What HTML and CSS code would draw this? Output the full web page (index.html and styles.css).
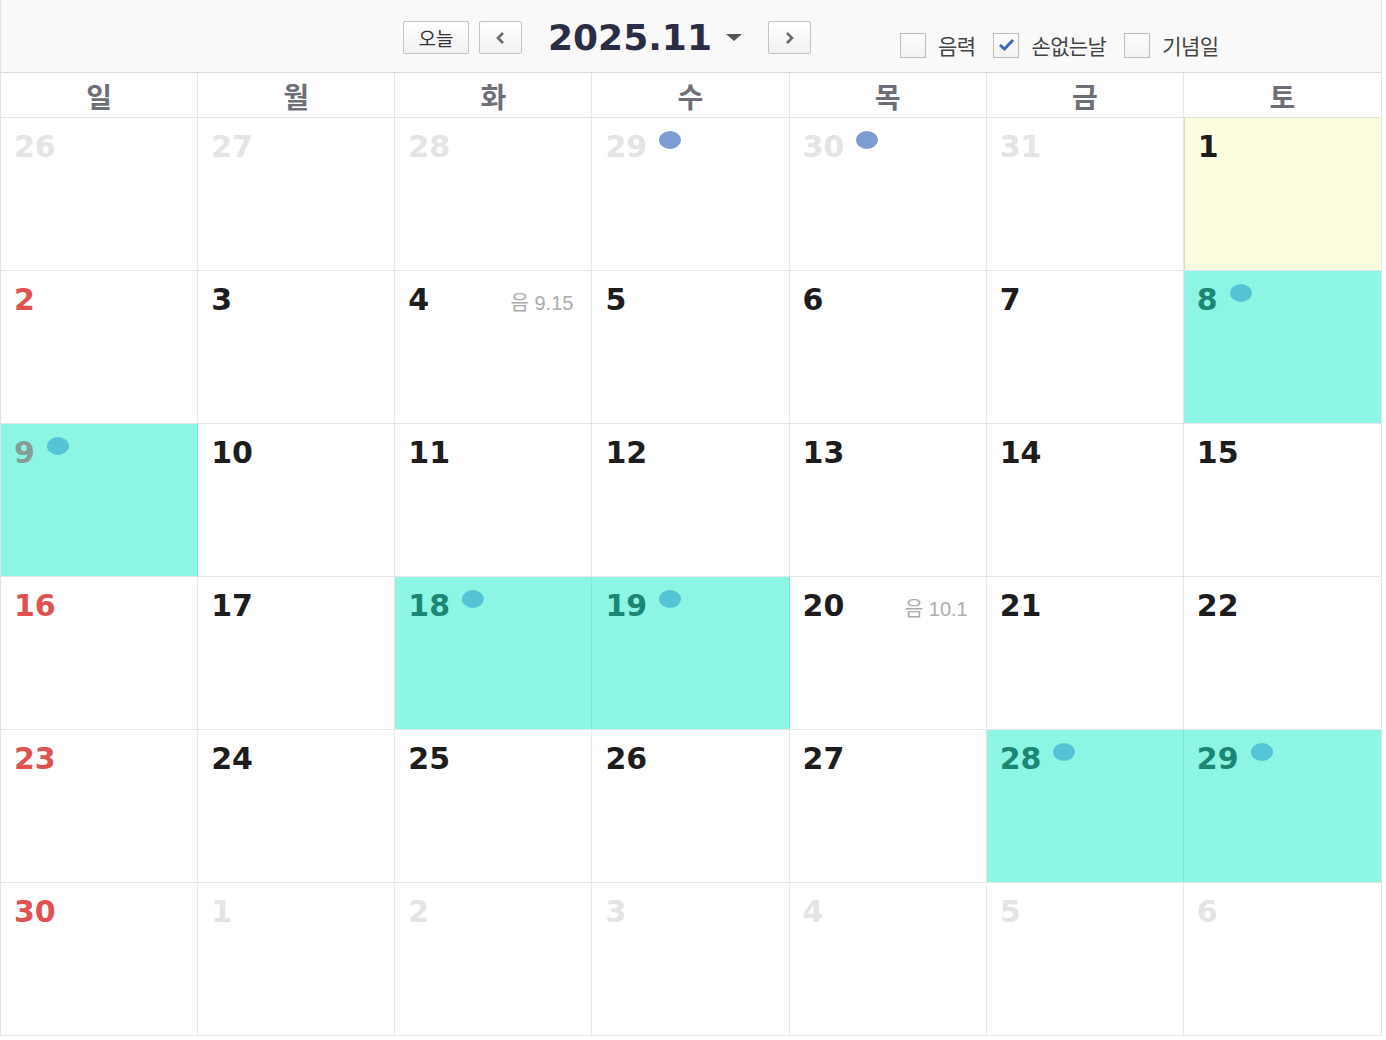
FILE: index.html
```html
<!DOCTYPE html>
<html lang="ko">
<head>
    <meta charset="UTF-8">
    <title>달력</title>
    <link rel="stylesheet" href="styles.css">
</head>
<body>
    <div class="toolbar">
        <div class="nav">
            <button class="btn btn-today">오늘</button>
            <button class="btn btn-arrow">
                <svg width="12" height="14" viewBox="0 0 12 14"><path d="M8 2 L3 7 L8 12" fill="none" stroke="#6a6a6a" stroke-width="2.6"/></svg>
            </button>
            <div class="month-title">2025.11</div>
            <span class="caret"></span>
            <button class="btn btn-arrow">
                <svg width="12" height="14" viewBox="0 0 12 14"><path d="M4 2 L9 7 L4 12" fill="none" stroke="#6a6a6a" stroke-width="2.6"/></svg>
            </button>
        </div>
        <div class="options">
            <label class="opt"><span class="box"></span>음력</label>
            <label class="opt"><span class="box">
                <svg width="17" height="14" viewBox="0 0 17 14"><path d="M2 7 L6.5 11 L15 2" fill="none" stroke="#3f67b8" stroke-width="3"/></svg>
            </span>손없는날</label>
            <label class="opt"><span class="box"></span>기념일</label>
        </div>
    </div>

    <div class="calendar">
        <div class="weekdays">
            <div>일</div><div>월</div><div>화</div><div>수</div><div>목</div><div>금</div><div>토</div>
        </div>

        <div class="week">
            <div class="cell other"><div class="day"><span class="num">26</span></div></div>
            <div class="cell other"><div class="day"><span class="num">27</span></div></div>
            <div class="cell other"><div class="day"><span class="num">28</span></div></div>
            <div class="cell other"><div class="day"><span class="num">29</span><span class="dot dot-past"></span></div></div>
            <div class="cell other"><div class="day"><span class="num">30</span><span class="dot dot-past"></span></div></div>
            <div class="cell other"><div class="day"><span class="num">31</span></div></div>
            <div class="cell today"><div class="day"><span class="num">1</span></div></div>
        </div>

        <div class="week">
            <div class="cell sun"><div class="day"><span class="num">2</span></div></div>
            <div class="cell"><div class="day"><span class="num">3</span></div></div>
            <div class="cell"><div class="day"><span class="num">4</span><span class="lunar">음 9.15</span></div></div>
            <div class="cell"><div class="day"><span class="num">5</span></div></div>
            <div class="cell"><div class="day"><span class="num">6</span></div></div>
            <div class="cell"><div class="day"><span class="num">7</span></div></div>
            <div class="cell good"><div class="day"><span class="num">8</span><span class="dot"></span></div></div>
        </div>

        <div class="week">
            <div class="cell good sun-good"><div class="day"><span class="num">9</span><span class="dot"></span></div></div>
            <div class="cell"><div class="day"><span class="num">10</span></div></div>
            <div class="cell"><div class="day"><span class="num">11</span></div></div>
            <div class="cell"><div class="day"><span class="num">12</span></div></div>
            <div class="cell"><div class="day"><span class="num">13</span></div></div>
            <div class="cell"><div class="day"><span class="num">14</span></div></div>
            <div class="cell"><div class="day"><span class="num">15</span></div></div>
        </div>

        <div class="week">
            <div class="cell sun"><div class="day"><span class="num">16</span></div></div>
            <div class="cell"><div class="day"><span class="num">17</span></div></div>
            <div class="cell good"><div class="day"><span class="num">18</span><span class="dot"></span></div></div>
            <div class="cell good"><div class="day"><span class="num">19</span><span class="dot"></span></div></div>
            <div class="cell"><div class="day"><span class="num">20</span><span class="lunar">음 10.1</span></div></div>
            <div class="cell"><div class="day"><span class="num">21</span></div></div>
            <div class="cell"><div class="day"><span class="num">22</span></div></div>
        </div>

        <div class="week">
            <div class="cell sun"><div class="day"><span class="num">23</span></div></div>
            <div class="cell"><div class="day"><span class="num">24</span></div></div>
            <div class="cell"><div class="day"><span class="num">25</span></div></div>
            <div class="cell"><div class="day"><span class="num">26</span></div></div>
            <div class="cell"><div class="day"><span class="num">27</span></div></div>
            <div class="cell good"><div class="day"><span class="num">28</span><span class="dot"></span></div></div>
            <div class="cell good"><div class="day"><span class="num">29</span><span class="dot"></span></div></div>
        </div>

        <div class="week">
            <div class="cell sun"><div class="day"><span class="num">30</span></div></div>
            <div class="cell other"><div class="day"><span class="num">1</span></div></div>
            <div class="cell other"><div class="day"><span class="num">2</span></div></div>
            <div class="cell other"><div class="day"><span class="num">3</span></div></div>
            <div class="cell other"><div class="day"><span class="num">4</span></div></div>
            <div class="cell other"><div class="day"><span class="num">5</span></div></div>
            <div class="cell other"><div class="day"><span class="num">6</span></div></div>
        </div>
    </div>
</body>
</html>
```

FILE: styles.css
```css
body {
    margin: 0;
    background: #fff;
    font-family: "Liberation Sans", "Noto Sans CJK KR", sans-serif;
}

/* 상단 툴바 */
.toolbar {
    height: 73px;
    box-sizing: border-box;
    width: 1382px;
    background: #f9f9fa;
    border-left: 1px solid #e4e4e4;
    border-right: 1px solid #e4e4e4;
    border-bottom: 1px solid #dcdcdc;
    display: flex;
    align-items: flex-start;
    padding-left: 402px;
}

.nav {
    display: flex;
    align-items: center;
    margin-top: 21px;
}

.btn {
    height: 33px;
    box-sizing: border-box;
    border: 1px solid #c3c3c3;
    border-radius: 2px;
    background: linear-gradient(#ffffff, #f1f1f1);
    padding: 0;
    display: flex;
    align-items: center;
    justify-content: center;
}

.btn-today {
    width: 66px;
    font-family: "Noto Sans CJK KR", sans-serif;
    font-size: 19px;
    color: #333;
    margin-right: 10px;
}

.btn-arrow {
    width: 43px;
}

.month-title {
    font-family: "DejaVu Sans", sans-serif;
    font-weight: bold;
    font-size: 36px;
    color: #2b2d44;
    margin-left: 26px;
    line-height: 33px;
}

.caret {
    width: 0;
    height: 0;
    border-left: 8px solid transparent;
    border-right: 8px solid transparent;
    border-top: 7px solid #555;
    margin-left: 14px;
    margin-right: 26px;
}

/* 표시 옵션 */
.options {
    display: flex;
    align-items: center;
    margin-left: 89px;
    margin-top: 30px;
}

.opt {
    display: flex;
    align-items: center;
    font-family: "Noto Sans CJK KR", sans-serif;
    font-size: 21px;
    color: #444;
    margin-right: 18px;
    letter-spacing: -0.6px;
}

.box {
    width: 26px;
    height: 25px;
    box-sizing: border-box;
    border: 1px solid #bdbdbd;
    background: linear-gradient(#fdfdfd, #f3f3f3);
    margin-right: 12px;
    display: flex;
    align-items: center;
    justify-content: center;
}

/* 달력 */
.calendar {
    width: 1382px;
    border-left: 1px solid #e4e4e4;
    border-right: 1px solid #e4e4e4;
    box-sizing: border-box;
}

.weekdays {
    display: grid;
    grid-template-columns: repeat(7, 1fr);
    height: 45px;
    border-bottom: 1px solid #e1e1e1;
    box-sizing: border-box;
}

.weekdays div {
    display: flex;
    align-items: center;
    justify-content: center;
    padding-top: 2px;
    font-family: "Noto Sans CJK KR", sans-serif;
    font-weight: bold;
    font-size: 28px;
    color: #6e6e76;
    border-right: 1px solid #e6e6e6;
}

.weekdays div:last-child {
    border-right: none;
}

.week {
    display: grid;
    grid-template-columns: repeat(7, 1fr);
    height: 153px;
    border-bottom: 1px solid #e6e6e6;
    box-sizing: border-box;
}

.cell {
    border-right: 1px solid #e8e8e8;
    padding: 14px 18px 0 13px;
}

.cell:last-child {
    border-right: none;
}

.day {
    display: flex;
    align-items: baseline;
}

.num {
    font-family: "DejaVu Sans", sans-serif;
    font-weight: bold;
    font-size: 30px;
    line-height: 30px;
    color: #1d1d1d;
}

.other .num {
    color: #e4e4e4;
}

.sun .num {
    color: #df5252;
}

.today {
    background: #fdfedf;
    border-left: 1px solid #d8d8cc;
}

.good {
    background: #8cf5e4;
    border-right-color: #7fe8d8;
}

.good .num {
    color: #1c8674;
}

.sun-good .num {
    color: #889c96;
}

.dot {
    align-self: flex-start;
    width: 22px;
    height: 18px;
    border-radius: 50%;
    background: #55c4d6;
    margin-left: 12px;
    margin-top: -1px;
}

.dot-past {
    background: #7e9cd4;
}

.lunar {
    margin-left: auto;
    font-size: 20px;
    color: #acacac;
}
```
